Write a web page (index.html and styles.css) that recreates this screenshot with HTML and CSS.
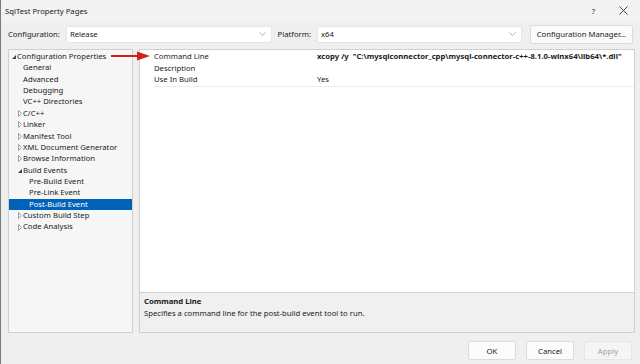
FILE: index.html
```html
<!DOCTYPE html>
<html lang="en">
<head>
  <meta charset="UTF-8" />
  <title>SqlTest Property Pages</title>
  <link rel="stylesheet" href="styles.css">
</head>
<body>
  <div class="dialog">
    <div class="titlebar">
      <span class="title">SqlTest Property Pages</span>
      <span class="tb-btn help">?</span>
      <span class="tb-btn close">
        <svg width="9" height="9" viewBox="0 0 9 9"><path d="M0.5 0.5L8.5 8.5M8.5 0.5L0.5 8.5" stroke="#333" stroke-width="0.9" fill="none"/></svg>
      </span>
    </div>

    <div class="toolbar">
      <label class="tool-label">Configuration:</label>
      <div class="select config-select">
        <span>Release</span>
        <svg class="caret" width="7" height="4" viewBox="0 0 7 4"><path d="M0.5 0.5L3.5 3.5L6.5 0.5" stroke="#999" stroke-width="0.8" fill="none"/></svg>
      </div>
      <label class="tool-label">Platform:</label>
      <div class="select platform-select">
        <span>x64</span>
        <svg class="caret" width="7" height="4" viewBox="0 0 7 4"><path d="M0.5 0.5L3.5 3.5L6.5 0.5" stroke="#999" stroke-width="0.8" fill="none"/></svg>
      </div>
      <button class="btn config-btn">Configuration Manager...</button>
    </div>

    <div class="main">
      <div class="tree">
        <div class="node l0"><svg class="glyph" viewBox="0 0 6 11"><path d="M5 4V8H1Z" fill="#444"/></svg>Configuration Properties</div>
        <div class="node l1"><span class="glyph"></span>General</div>
        <div class="node l1"><span class="glyph"></span>Advanced</div>
        <div class="node l1"><span class="glyph"></span>Debugging</div>
        <div class="node l1"><span class="glyph"></span>VC++ Directories</div>
        <div class="node l1"><svg class="glyph" viewBox="0 0 6 11"><path d="M1.5 2.5V8.5L4.5 5.5Z" fill="none" stroke="#8a8a8a" stroke-width="0.8"/></svg>C/C++</div>
        <div class="node l1"><svg class="glyph" viewBox="0 0 6 11"><path d="M1.5 2.5V8.5L4.5 5.5Z" fill="none" stroke="#8a8a8a" stroke-width="0.8"/></svg>Linker</div>
        <div class="node l1"><svg class="glyph" viewBox="0 0 6 11"><path d="M1.5 2.5V8.5L4.5 5.5Z" fill="none" stroke="#8a8a8a" stroke-width="0.8"/></svg>Manifest Tool</div>
        <div class="node l1"><svg class="glyph" viewBox="0 0 6 11"><path d="M1.5 2.5V8.5L4.5 5.5Z" fill="none" stroke="#8a8a8a" stroke-width="0.8"/></svg>XML Document Generator</div>
        <div class="node l1"><svg class="glyph" viewBox="0 0 6 11"><path d="M1.5 2.5V8.5L4.5 5.5Z" fill="none" stroke="#8a8a8a" stroke-width="0.8"/></svg>Browse Information</div>
        <div class="node l1"><svg class="glyph" viewBox="0 0 6 11"><path d="M5 4V8H1Z" fill="#444"/></svg>Build Events</div>
        <div class="node l2"><span class="glyph"></span>Pre-Build Event</div>
        <div class="node l2"><span class="glyph"></span>Pre-Link Event</div>
        <div class="node l2 selected"><span class="glyph"></span>Post-Build Event</div>
        <div class="node l1"><svg class="glyph" viewBox="0 0 6 11"><path d="M1.5 2.5V8.5L4.5 5.5Z" fill="none" stroke="#8a8a8a" stroke-width="0.8"/></svg>Custom Build Step</div>
        <div class="node l1"><svg class="glyph" viewBox="0 0 6 11"><path d="M1.5 2.5V8.5L4.5 5.5Z" fill="none" stroke="#8a8a8a" stroke-width="0.8"/></svg>Code Analysis</div>
      </div>

      <div class="props">
        <div class="grid">
          <div class="row">
            <span class="name">Command Line</span>
            <span class="value strong">xcopy /y&nbsp; "C:\mysqlconnector_cpp\mysql-connector-c++-8.1.0-winx64\lib64\*.dll"</span>
          </div>
          <div class="row">
            <span class="name">Description</span>
            <span class="value"></span>
          </div>
          <div class="row last">
            <span class="name">Use In Build</span>
            <span class="value">Yes</span>
          </div>
        </div>
        <div class="desc">
          <div class="desc-title">Command Line</div>
          <div class="desc-text">Specifies a command line for the post-build event tool to run.</div>
        </div>
      </div>

      <svg class="arrow" width="40" height="10" viewBox="0 0 40 10">
        <path d="M0 5H28" stroke="#d0201c" stroke-width="2"/>
        <path d="M26 0.5L39 5L26 9.5Z" fill="#d0201c"/>
      </svg>
    </div>

    <div class="footer">
      <button class="btn">OK</button>
      <button class="btn">Cancel</button>
      <button class="btn disabled">Apply</button>
    </div>
  </div>
</body>
</html>
```

FILE: styles.css
```css
:root {
  --dialog-bg: #efefef;
  --panel-bg: #f6f6f6;
  --border: #d0d0d0;
  --text: #1a1a1a;
  --select-blue: #0063b8;
}
* { margin: 0; padding: 0; box-sizing: border-box; }
body {
  font-family: "Noto Sans", "Open Sans", sans-serif;
  font-size: 7.7px;
  color: var(--text);
  background: var(--dialog-bg);
}
.dialog {
  width: 640px;
  height: 364px;
  display: flex;
  flex-direction: column;
  border-left: 1px solid #7a7a7a;
  overflow: hidden;
}

/* title bar */
.titlebar {
  height: 21px;
  display: flex;
  align-items: center;
  padding: 0 12px 0 4px;
  background: #f3f3f3;
}
.title { flex: 1; }
.tb-btn { color: #333; display: flex; align-items: center; }
.help { margin-right: 24px; }

/* configuration bar */
.toolbar {
  height: 26px;
  display: flex;
  align-items: center;
  padding: 0 7px;
}
.tool-label { margin-right: 6px; }
.select {
  height: 17px;
  background: #fff;
  border: 1px solid #e6e6e6;
  border-radius: 2px;
  display: flex;
  align-items: center;
  justify-content: space-between;
  padding: 0 5px 0 3px;
}
.config-select { width: 207px; margin-right: 6px; }
.platform-select { width: 206px; margin-right: 8px; }
.btn {
  font-family: inherit;
  font-size: 7.7px;
  color: var(--text);
  background: #fbfbfb;
  border: 1px solid #dcdcdc;
  border-radius: 2px;
  height: 19px;
}
.config-btn { width: 104px; }

/* panels */
.main {
  position: relative;
  height: 287px;
  display: flex;
  gap: 6px;
  padding: 2px 5px 0 7px;
}
.tree {
  width: 125px;
  flex: none;
  height: 284px;
  background: var(--panel-bg);
  border: 1px solid var(--border);
  padding-top: 1px;
}
.node {
  height: 11.36px;
  line-height: 11.36px;
  display: flex;
  align-items: center;
  white-space: nowrap;
}
.l0 { padding-left: 2px; }
.l1 { padding-left: 8px; }
.l2 { padding-left: 14px; }
.glyph { width: 6px; height: 11px; flex: none; }
.node.selected { background: var(--select-blue); color: #fff; }

.props {
  flex: 1;
  min-width: 0;
  height: 284px;
  display: flex;
  flex-direction: column;
  border: 1px solid var(--border);
}
.grid {
  flex: 1;
  background: #fff;
  padding-top: 1px;
  padding-left: 14px;
}
.row {
  display: flex;
  height: 11.5px;
  line-height: 11.5px;
  white-space: nowrap;
  overflow: hidden;
}
.row.last { border-bottom: 1px solid #eeeeee; height: 12.5px; }
.name { width: 163px; flex: none; }
.value { overflow: hidden; }
.strong { font-weight: bold; }

.desc {
  height: 40px;
  border-top: 1px solid var(--border);
  background: #f0f0f0;
  padding: 3px 4px;
}
.desc-title { font-weight: bold; line-height: 11px; }
.desc-text { line-height: 13px; }

.arrow { position: absolute; left: 110px; top: 4px; }

/* buttons */
.footer {
  flex: 1;
  display: flex;
  justify-content: flex-end;
  align-items: center;
  gap: 10px;
  padding: 3px 8px 0 0;
}
.footer .btn { width: 48px; }
.btn.disabled { color: #a0a0a0; background: #f5f5f5; border-color: #e6e6e6; }
```
